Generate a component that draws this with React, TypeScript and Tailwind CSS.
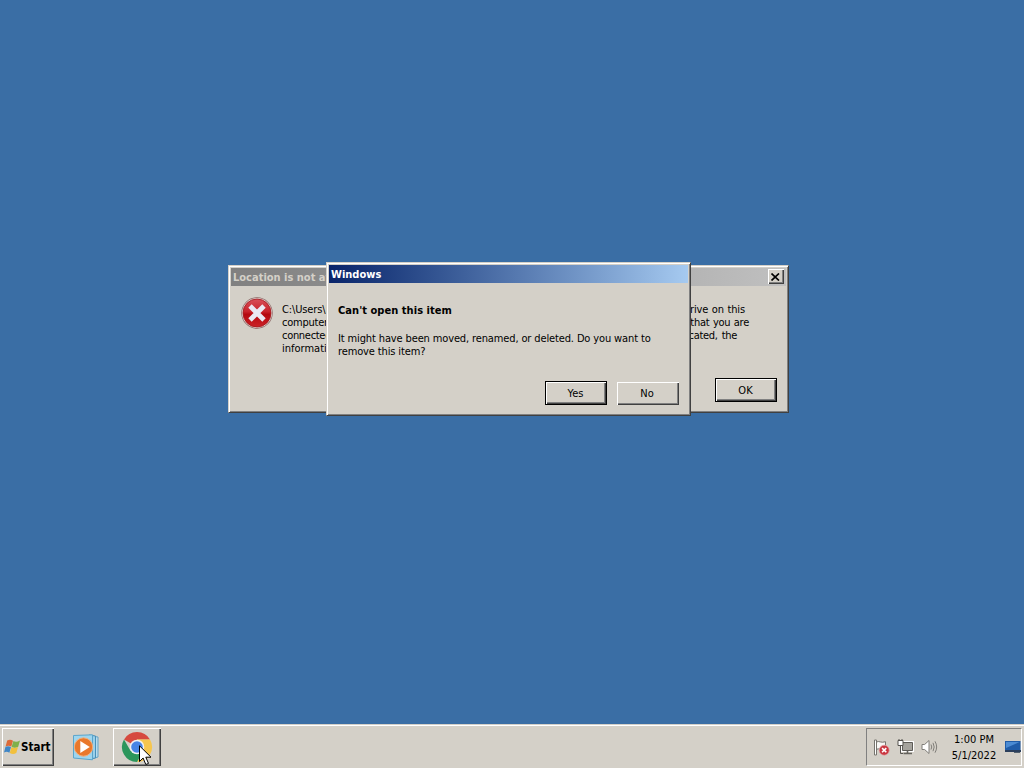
import type { ReactNode } from "react";

const messageLines = [
  {
    text: "C:\\Users\\Public\\Docs refers to a location that is unavailable. It could be on a hard drive on this",
    width: "w-[463px] tracking-[-0.13px]",
  },
  {
    text: "computer, or on a network. Check to make sure that the disk is properly inserted, or that you are",
    width: "w-[467px] tracking-[-0.24px]",
  },
  {
    text: "connected to the Internet or your network, and then try again. If it still cannot be located, the",
    width: "w-[455px] tracking-[-0.3px]",
  },
];

function Frame({ className, children }: { className: string; children: ReactNode }) {
  return (
    <div
      className={`absolute flex flex-col border border-t-[#d4d0c8] border-l-[#d4d0c8] border-r-[#404040] border-b-[#404040] bg-[#d4d0c8] shadow-[inset_1px_1px_0_#fff,inset_-1px_-1px_0_#808080] p-[2px] ${className}`}
    >
      {children}
    </div>
  );
}

function DialogButton({ label, primary }: { label: string; primary?: boolean }) {
  return (
    <button
      className={
        primary
          ? "flex h-6 w-[62px] items-center justify-center border border-black bg-[#d4d0c8] pr-px shadow-[inset_1px_1px_0_#fff,inset_-1px_-1px_0_#404040,inset_-2px_-2px_0_#808080]"
          : "flex h-[23px] w-[62px] items-center justify-center bg-[#d4d0c8] pr-[2px] shadow-[inset_1px_1px_0_#fff,inset_-1px_-1px_0_#404040,inset_-2px_-2px_0_#808080]"
      }
    >
      {label}
    </button>
  );
}

function ErrorIcon() {
  return (
    <svg width="32" height="32" viewBox="0 0 32 32" className="shrink-0">
      <defs>
        <linearGradient id="err" x1="0" y1="0" x2="0" y2="1">
          <stop offset="0" stopColor="#d8505a" />
          <stop offset="0.45" stopColor="#c8222a" />
          <stop offset="0.55" stopColor="#b5080f" />
          <stop offset="1" stopColor="#cc2228" />
        </linearGradient>
      </defs>
      <circle cx="16" cy="16" r="15.7" fill="#8d6866" />
      <circle cx="16" cy="16" r="15" fill="#e0cfcd" />
      <circle cx="16" cy="16" r="14" fill="url(#err)" stroke="#a3181c" strokeWidth="0.8" />
      <path d="M9 9 23 23M23 9 9 23" stroke="#e9e9f3" strokeWidth="4.8" />
    </svg>
  );
}

function WindowsFlag() {
  return (
    <svg width="17" height="16" viewBox="0 0 17 16">
      <path d="M3.2 1.6C5.4 .2 7.2 .6 9 1.7L7.3 7.6C5.4 6.4 3.7 6.5 1.6 7.4Z" fill="#dc6a38" />
      <path d="M9.4 2C11.5 3.1 13.5 2.9 16 1.4L14.2 7.8C12 9 9.8 9 7.6 7.9Z" fill="#80b04a" />
      <path d="M1.5 7.8C3.5 6.8 5.2 7 7 8L5.4 13.8C3.6 12.6 2 12.6 0 13.4Z" fill="#3f86c6" />
      <path d="M7.4 8.3C9.7 9.4 11.5 9.4 14 8L12.3 14C10 15.4 8 15.2 5.8 14.1Z" fill="#f2c03c" />
    </svg>
  );
}

function MediaPlayerIcon() {
  return (
    <svg width="28" height="28" viewBox="0 0 28 28">
      <path d="M19 3 26 4V24L19 26Z" fill="#b9dced" stroke="#63a4c7" />
      <path d="M17 2 23.5 3V25L17 26Z" fill="#9bd0e9" stroke="#478fb9" />
      <path d="M1.5 2.5 20.5 1.8V26.8L1.5 25Z" fill="#9ed5ee" stroke="#5aa5cc" />
      <circle cx="11.5" cy="14" r="9.2" fill="#e9782b" stroke="#f3b07d" strokeWidth="1" />
      <path d="M8.3 8 17.8 14 8.3 20Z" fill="#fff" />
    </svg>
  );
}

function ChromeIcon() {
  return (
    <svg width="32" height="32" viewBox="0 0 32 32">
      <path d="M16 16 3 8.5A15 15 0 0 1 29 8.5H16Z" fill="#d64a3f" />
      <path d="M16 8.5H29A15 15 0 0 1 16 31L22.5 19.7Z" fill="#f6c64e" />
      <path d="M3 8.5A15 15 0 0 0 16 31L22.5 19.7 16 16 9.5 19.7Z" fill="#2c965c" />
      <circle cx="16" cy="16" r="7.3" fill="#f1f1f4" />
      <circle cx="16" cy="16" r="5.8" fill="#4784e6" />
    </svg>
  );
}

function Cursor() {
  return (
    <svg width="13" height="21" viewBox="0 0 13 21" className="absolute top-[17px] left-[26px]">
      <path
        d="M.5 .8V16.5L4.1 13 6.8 19.5 9.5 18.4 6.8 12.2H12Z"
        fill="#fff"
        stroke="#000"
        strokeWidth="1"
      />
    </svg>
  );
}

function FlagIcon() {
  return (
    <svg width="17" height="17" viewBox="0 0 17 17" fill="none">
      <path d="M3.5 3C6 1.4 8 4.4 12.5 2.7V10C8.5 11.6 6 8.8 3.5 10.3Z" fill="#f7f7f5" stroke="#77756f" />
      <path d="M1.5 1V16H3.5V1Z" fill="#fff" stroke="#77756f" />
      <circle cx="11.2" cy="11.2" r="5" fill="#c93640" stroke="#e2a4a5" strokeWidth="0.7" />
      <path d="M9.1 9.1 13.3 13.3M13.3 9.1 9.1 13.3" stroke="#fff" strokeWidth="1.6" />
    </svg>
  );
}

function NetworkIcon() {
  return (
    <svg width="17" height="16" viewBox="0 0 17 16" fill="none">
      <path d="M5.5 3.5H15.5V11.5H5.5Z" stroke="#fff" strokeWidth="3" />
      <path d="M5.5 3.5H15.5V11.5H5.5Z" fill="#a5a39d" stroke="#5d5b56" />
      <path d="M6.5 14.5H15M10.5 11.5V14" stroke="#65635e" strokeWidth="1.6" />
      <path d="M1 1.5H6V6.5H1Z" fill="#fff" stroke="#55534f" />
      <path d="M2 0V2M5 0V2M3.5 6.5V14.5H6" stroke="#55534f" />
    </svg>
  );
}

function SpeakerIcon() {
  return (
    <svg width="17" height="16" viewBox="0 0 17 16" fill="none">
      <path d="M1 5.5H3.6L8 1.5V14.5L3.6 10.5H1Z" fill="#fff" stroke="#7f7d78" />
      <path d="M10 5.5Q11.5 8 10 10.5M12 3.8Q14.4 8 12 12.2M14 2.3Q17.3 8 14 13.7" stroke="#807e79" />
    </svg>
  );
}

function DesktopIcon() {
  return (
    <svg width="16" height="14" viewBox="0 0 16 14">
      <path d="M0 1H15.5V11H0Z" fill="#205ca8" />
      <path d="M1 2H14.5L1 8Z" fill="#4b8bd3" />
      <path d="M0 10H16V12H0Z" fill="#2b3f5c" />
      <path d="M9 12H15V13H9Z" fill="#54616e" />
    </svg>
  );
}

export default function App() {
  return (
    <div className="relative flex h-[768px] w-[1024px] flex-col justify-end overflow-hidden bg-[#3a6ea5] font-['DejaVu_Sans_Condensed','DejaVu_Sans',sans-serif] text-[11px] leading-[13px] text-black [font-stretch:condensed]">
      <Frame className="top-[265px] left-[228px] h-[148px] w-[561px]">
        <div className="flex h-[18px] shrink-0 items-center justify-between bg-linear-to-r from-[#808080] to-[#c0c0c0] px-[2px]">
          <span className="font-bold whitespace-nowrap text-[#d4d0c8]">Location is not available</span>
          <button className="mb-px flex h-[15px] w-4 items-center justify-center bg-[#d4d0c8] pr-px shadow-[inset_1px_1px_0_#fff,inset_-1px_-1px_0_#404040,inset_-2px_-2px_0_#808080]">
            <svg width="9" height="8" viewBox="0 0 9 8">
              <path d="M.5 .5 8 7.5M8 .5 .5 7.5" stroke="#000" strokeWidth="1.7" />
            </svg>
          </button>
        </div>
        <div className="flex gap-[9px] pt-[11px] pl-[10px]">
          <ErrorIcon />
          <div className="pt-[6px]">
            {messageLines.map((line) => (
              <p key={line.text} className={`text-justify [text-align-last:justify] whitespace-nowrap ${line.width}`}>
                {line.text}
              </p>
            ))}
            <p className="whitespace-nowrap">information might have been moved to a different location.</p>
          </div>
        </div>
        <div className="mt-auto flex justify-end pr-[9px] pb-[8px]">
          <DialogButton label="OK" primary />
        </div>
      </Frame>

      <Frame className="top-[262px] left-[326px] h-[154px] w-[365px]">
        <div className="flex h-[18px] shrink-0 items-center bg-linear-to-r from-[#0a246a] to-[#a6caf0] px-[2px]">
          <span className="font-bold text-white">Windows</span>
        </div>
        <div className="px-[9px] pt-[21px]">
          <h1 className="font-bold tracking-[0.05px]">Can't open this item</h1>
          <p className="mt-[15px] tracking-[-0.13px] whitespace-nowrap">
            It might have been moved, renamed, or deleted. Do you want to
            <br />
            remove this item?
          </p>
        </div>
        <div className="mt-auto flex items-center justify-end gap-[10px] pr-[9px] pb-[8px]">
          <DialogButton label="Yes" primary />
          <DialogButton label="No" />
        </div>
      </Frame>

      <div className="flex h-11 items-start border-t border-[#d4d0c8] bg-[#d4d0c8] pt-[3px] pr-[2px] pl-[2px] shadow-[inset_0_1px_0_#fff]">
        <button className="flex h-[38px] w-[52px] items-center bg-[#d4d0c8] pl-[2px] text-[11.5px] font-bold shadow-[inset_1px_1px_0_#fff,inset_-1px_-1px_0_#404040,inset_-2px_-2px_0_#808080]">
          <WindowsFlag />
          Start
        </button>
        <div className="ml-[5px] flex h-[38px] w-[54px] items-center justify-center">
          <MediaPlayerIcon />
        </div>
        <div className="relative flex h-[38px] w-12 items-center justify-center bg-[#d4d0c8] shadow-[inset_1px_1px_0_#fff,inset_-1px_-1px_0_#404040,inset_-2px_-2px_0_#808080]">
          <ChromeIcon />
          <Cursor />
        </div>
        <div className="ml-auto flex h-[38px] w-[156px] items-center border border-t-[#808080] border-r-white border-b-white border-l-[#808080] pl-[6px]">
          <div className="flex gap-[7px]">
            <FlagIcon />
            <NetworkIcon />
            <SpeakerIcon />
          </div>
          <div className="ml-[11px] w-[50px] pt-px text-center leading-4 whitespace-nowrap">
            <p>1:00 PM</p>
            <p>5/1/2022</p>
          </div>
          <div className="ml-auto">
            <DesktopIcon />
          </div>
        </div>
      </div>
    </div>
  );
}
